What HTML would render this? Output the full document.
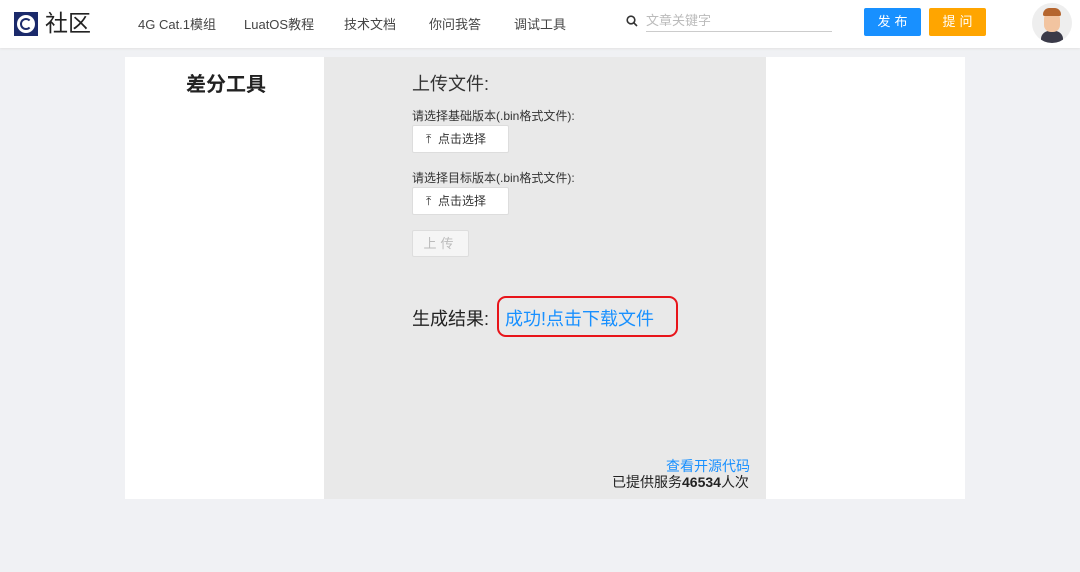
<!DOCTYPE html>
<html><head><meta charset="utf-8"><style>
*{margin:0;padding:0;box-sizing:border-box}
body{width:1080px;height:572px;background:#f0f1f4;font-family:"Liberation Sans","Noto Sans CJK SC",sans-serif;position:relative;overflow:hidden;color:#333}
.hdr{position:absolute;left:0;top:0;width:1080px;height:48px;background:#fff;box-shadow:0 1px 2px #e3e3e3}
.a{position:absolute;white-space:nowrap;line-height:1}
.nav{font-size:13px;color:#444;top:18px}
.btn{position:absolute;top:8px;width:57px;height:28px;border-radius:2px;color:#fff;font-size:13px;text-align:center;line-height:28px;letter-spacing:4px;text-indent:4px}
.sel{position:absolute;left:412px;width:97px;height:28px;background:#fff;border:1px solid #ddd;border-radius:2px;font-size:12px;line-height:26px;padding-left:13px;color:#333}
</style></head><body>
<div class="hdr">
 <div class="a" style="left:14px;top:12px;width:24px;height:24px;background:#1b2a6b"><div style="position:absolute;left:3px;top:3px;width:18px;height:18px;border-radius:50%;background:#fff"></div><div style="position:absolute;left:6px;top:6px;width:12px;height:12px;border-radius:50%;border:2px solid #1b2a6b;border-right-color:transparent"></div></div>
 <div class="a" style="left:45px;top:12px;font-size:23px;color:#222">社区</div>
 <div class="a nav" style="left:138px">4G Cat.1模组</div>
 <div class="a nav" style="left:244px">LuatOS教程</div>
 <div class="a nav" style="left:344px">技术文档</div>
 <div class="a nav" style="left:429px">你问我答</div>
 <div class="a nav" style="left:514px">调试工具</div>
 <svg class="a" style="left:626px;top:15px" width="12" height="12"><circle cx="5" cy="5" r="3.8" fill="none" stroke="#333" stroke-width="1.6"/><path d="M8 8l3 3" stroke="#333" stroke-width="1.6"/></svg>
 <div class="a" style="left:646px;top:14px;font-size:13px;color:#bbb">文章关键字</div>
 <div class="a" style="left:646px;top:31px;width:186px;height:1px;background:#ccc"></div>
 <div class="btn" style="left:864px;background:#1890ff">发布</div>
 <div class="btn" style="left:929px;background:#ffa500">提问</div>
 <div class="a" style="left:1032px;top:3px;width:40px;height:40px;border-radius:50%;background:#eee;overflow:hidden">
  <div style="position:absolute;left:9px;top:28px;width:22px;height:14px;border-radius:8px 8px 0 0;background:#3a3a48"></div>
  <div style="position:absolute;left:12px;top:9px;width:16px;height:20px;border-radius:7px;background:#f2c4a0"></div>
  <div style="position:absolute;left:11px;top:5px;width:18px;height:8px;border-radius:8px 8px 2px 2px;background:#b5652e"></div>
 </div>
</div>
<div class="a" style="left:125px;top:57px;width:840px;height:442px;background:#fff"></div>
<div class="a" style="left:324px;top:57px;width:442px;height:442px;background:#e9e9e9"></div>
<div class="a" style="left:186px;top:75px;font-size:20px;font-weight:bold;color:#222">差分工具</div>
<div class="a" style="left:412px;top:75px;font-size:18px">上传文件:</div>
<div class="a" style="left:412px;top:110px;font-size:12px">请选择基础版本(.bin格式文件):</div>
<div class="sel" style="top:125px">⤒&nbsp;&nbsp;点击选择</div>
<div class="a" style="left:412px;top:172px;font-size:12px">请选择目标版本(.bin格式文件):</div>
<div class="sel" style="top:187px">⤒&nbsp;&nbsp;点击选择</div>
<div class="a" style="left:412px;top:230px;width:57px;height:27px;border:1px solid #ddd;background:#f5f5f5;border-radius:2px;font-size:13px;color:#bbb;text-align:center;line-height:25px;letter-spacing:4px">上传</div>
<div class="a" style="left:412px;top:310px;font-size:18px;color:#222">生成结果:</div>
<div class="a" style="left:497px;top:296px;width:181px;height:41px;border:2.5px solid #e8141a;border-radius:9px"></div>
<div class="a" style="left:505px;top:310px;font-size:18px;color:#1890ff">成功!点击下载文件</div>
<div class="a" style="left:666px;top:459px;font-size:14px;color:#1890ff">查看开源代码</div>
<div class="a" style="left:612px;top:475px;font-size:14px;color:#222">已提供服务<b>46534</b>人次</div>
</body></html>
